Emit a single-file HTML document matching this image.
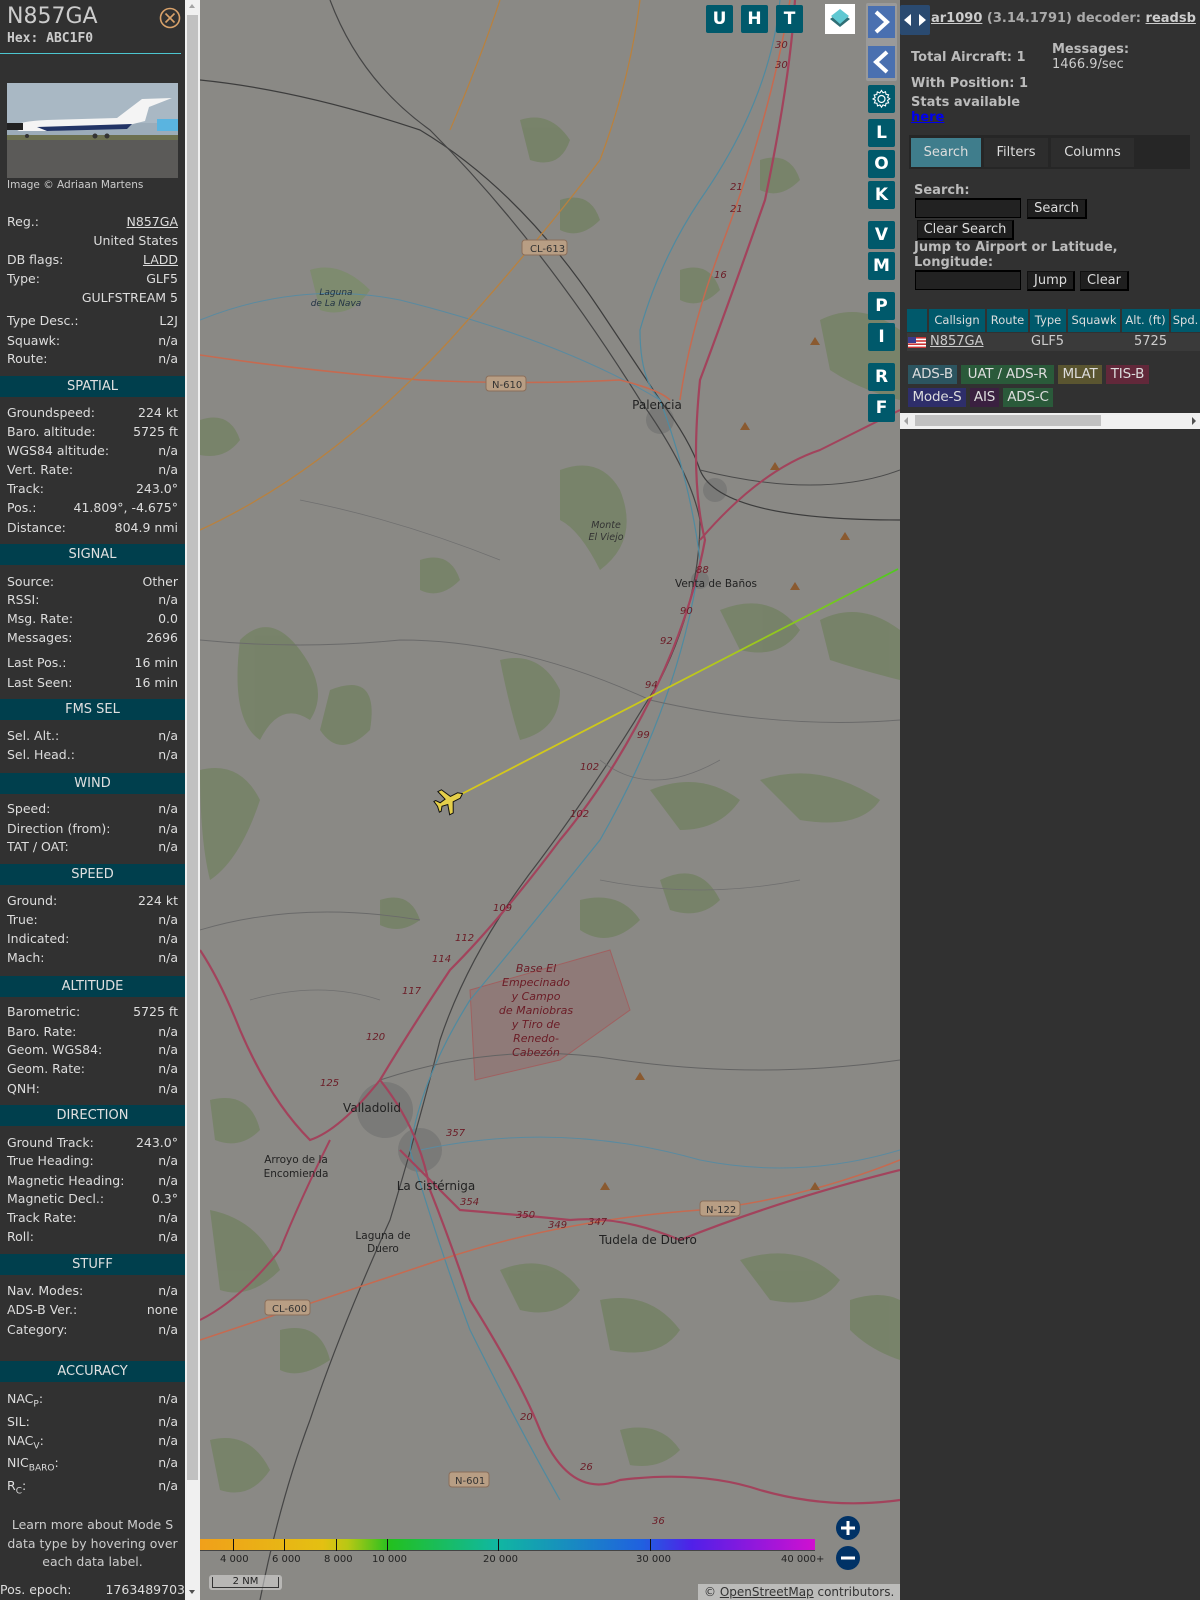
<!DOCTYPE html>
<html><head><meta charset="utf-8"><style>
*{margin:0;padding:0;box-sizing:border-box}
body{width:1200px;height:1600px;overflow:hidden;background:#313131;font-family:"DejaVu Sans","Liberation Sans",sans-serif;color:#ddd;position:relative}
.abs{position:absolute}
#side{position:absolute;left:0;top:0;width:185px;height:1600px;background:#313131}
.r{position:absolute;left:7px;width:171px;font-size:12.5px;line-height:16px;color:#ddd;display:flex;justify-content:space-between;white-space:nowrap}
.r span:last-child{text-align:right}
.h{position:absolute;left:0;width:185px;height:21px;background:#003f4d;color:#e0e0e0;font-size:13px;line-height:21px;text-align:center}
u{text-decoration:underline}
#sb{position:absolute;left:185px;top:0;width:15px;height:1600px;background:#f0f0f0}
#map{position:absolute;left:200px;top:0;width:700px;height:1600px;background:#8a8985;overflow:hidden}
.mb{position:absolute;width:27px;height:28px;background:#00596b;color:#fff;font-weight:bold;font-size:17px;text-align:center;line-height:28px;border-radius:2px}
#right{position:absolute;left:900px;top:0;width:300px;height:1600px;background:#313131}
.b{font-weight:bold;color:#bbb;font-size:13px}
.btn{position:absolute;background:#1f1f1f;border:1px solid #111;border-right:2px solid #000;border-bottom:2px solid #000;color:#ddd;font-size:13px;text-align:center;line-height:17px}
.inp{position:absolute;background:#222;border:1px solid #000;border-top:2px solid #000}
.th{position:absolute;top:309px;height:23px;background:#00596b;color:#ddd;font-size:11.5px;line-height:23px;text-align:center}
.bd{position:absolute;height:19px;font-size:13.5px;line-height:19px;text-align:center;color:#ddd;white-space:nowrap;letter-spacing:-0.2px}
.lab{position:absolute;font-size:10px;color:#222}
</style></head><body>
<div id="side">
<div class="abs" style="left:7px;top:4px;font-size:22px;color:#ccc">N857GA</div>
<div class="abs" style="left:7px;top:31px;font-size:13px;font-weight:bold;font-family:'DejaVu Sans Mono','Liberation Mono',monospace;color:#ccc">Hex: ABC1F0</div>
<svg class="abs" style="left:159px;top:7px" width="22" height="22"><circle cx="11" cy="11" r="9.5" fill="none" stroke="#d9a26a" stroke-width="1.6"/><path d="M6.5 6.5L15.5 15.5M15.5 6.5L6.5 15.5" stroke="#d9a26a" stroke-width="1.6"/></svg>
<div class="abs" style="left:0;top:53px;width:181px;height:1px;background:#4cc6d0"></div>
<svg class="abs" style="left:7px;top:83px" width="171" height="95">
<rect width="171" height="95" fill="#9cacb9"/><rect y="0" width="171" height="40" fill="#a9b8c4"/><rect y="55" width="171" height="40" fill="#5b5a58"/><rect y="52" width="171" height="5" fill="#6c7050"/>
<path d="M5 44 Q12 38 40 37 L110 35 L135 16 L165 15 L142 24 L138 38 L110 45 L40 48 L12 48 Z" fill="#f4f4f4"/><path d="M30 44 L125 41 L120 46 L40 48Z" fill="#223466"/><rect x="150" y="36" width="21" height="12" fill="#5ab4e0"/><rect x="0" y="40" width="16" height="7" fill="#222"/>
<g fill="#333"><circle cx="20" cy="53" r="2"/><circle cx="88" cy="53" r="2.5"/><circle cx="100" cy="53" r="2.5"/></g>
</svg>
<div class="abs" style="left:7px;top:179px;font-size:10.5px;color:#ccc">Image © Adriaan Martens</div>

<div class="r" style="top:214px"><span>Reg.:</span><span><u>N857GA</u></span></div>
<div class="r" style="top:233px"><span></span><span>United States</span></div>
<div class="r" style="top:252px"><span>DB flags:</span><span><u>LADD</u></span></div>
<div class="r" style="top:271px"><span>Type:</span><span>GLF5</span></div>
<div class="r" style="top:290px"><span></span><span>GULFSTREAM 5</span></div>
<div class="r" style="top:313px"><span>Type Desc.:</span><span>L2J</span></div>
<div class="r" style="top:333px"><span>Squawk:</span><span>n/a</span></div>
<div class="r" style="top:351px"><span>Route:</span><span>n/a</span></div>
<div class="h" style="top:376px">SPATIAL</div>
<div class="r" style="top:405px"><span>Groundspeed:</span><span>224 kt</span></div>
<div class="r" style="top:424px"><span>Baro. altitude:</span><span>5725 ft</span></div>
<div class="r" style="top:443px"><span>WGS84 altitude:</span><span>n/a</span></div>
<div class="r" style="top:462px"><span>Vert. Rate:</span><span>n/a</span></div>
<div class="r" style="top:481px"><span>Track:</span><span>243.0°</span></div>
<div class="r" style="top:500px"><span>Pos.:</span><span>41.809°, -4.675°</span></div>
<div class="r" style="top:520px"><span>Distance:</span><span>804.9 nmi</span></div>
<div class="h" style="top:544px">SIGNAL</div>
<div class="r" style="top:574px"><span>Source:</span><span>Other</span></div>
<div class="r" style="top:592px"><span>RSSI:</span><span>n/a</span></div>
<div class="r" style="top:611px"><span>Msg. Rate:</span><span>0.0</span></div>
<div class="r" style="top:630px"><span>Messages:</span><span>2696</span></div>
<div class="r" style="top:655px"><span>Last Pos.:</span><span>16 min</span></div>
<div class="r" style="top:675px"><span>Last Seen:</span><span>16 min</span></div>
<div class="h" style="top:699px">FMS SEL</div>
<div class="r" style="top:728px"><span>Sel. Alt.:</span><span>n/a</span></div>
<div class="r" style="top:747px"><span>Sel. Head.:</span><span>n/a</span></div>
<div class="h" style="top:773px">WIND</div>
<div class="r" style="top:801px"><span>Speed:</span><span>n/a</span></div>
<div class="r" style="top:821px"><span>Direction (from):</span><span>n/a</span></div>
<div class="r" style="top:839px"><span>TAT / OAT:</span><span>n/a</span></div>
<div class="h" style="top:864px">SPEED</div>
<div class="r" style="top:893px"><span>Ground:</span><span>224 kt</span></div>
<div class="r" style="top:912px"><span>True:</span><span>n/a</span></div>
<div class="r" style="top:931px"><span>Indicated:</span><span>n/a</span></div>
<div class="r" style="top:950px"><span>Mach:</span><span>n/a</span></div>
<div class="h" style="top:976px">ALTITUDE</div>
<div class="r" style="top:1004px"><span>Barometric:</span><span>5725 ft</span></div>
<div class="r" style="top:1024px"><span>Baro. Rate:</span><span>n/a</span></div>
<div class="r" style="top:1042px"><span>Geom. WGS84:</span><span>n/a</span></div>
<div class="r" style="top:1061px"><span>Geom. Rate:</span><span>n/a</span></div>
<div class="r" style="top:1081px"><span>QNH:</span><span>n/a</span></div>
<div class="h" style="top:1105px">DIRECTION</div>
<div class="r" style="top:1135px"><span>Ground Track:</span><span>243.0°</span></div>
<div class="r" style="top:1153px"><span>True Heading:</span><span>n/a</span></div>
<div class="r" style="top:1173px"><span>Magnetic Heading:</span><span>n/a</span></div>
<div class="r" style="top:1191px"><span>Magnetic Decl.:</span><span>0.3°</span></div>
<div class="r" style="top:1210px"><span>Track Rate:</span><span>n/a</span></div>
<div class="r" style="top:1229px"><span>Roll:</span><span>n/a</span></div>
<div class="h" style="top:1254px">STUFF</div>
<div class="r" style="top:1283px"><span>Nav. Modes:</span><span>n/a</span></div>
<div class="r" style="top:1302px"><span>ADS-B Ver.:</span><span>none</span></div>
<div class="r" style="top:1322px"><span>Category:</span><span>n/a</span></div>
<div class="h" style="top:1361px">ACCURACY</div>
<div class="r" style="top:1391px"><span>NAC<sub style="font-size:9px">P</sub>:</span><span>n/a</span></div>
<div class="r" style="top:1414px"><span>SIL:</span><span>n/a</span></div>
<div class="r" style="top:1433px"><span>NAC<sub style="font-size:9px">V</sub>:</span><span>n/a</span></div>
<div class="r" style="top:1455px"><span>NIC<sub style="font-size:9px">BARO</sub>:</span><span>n/a</span></div>
<div class="r" style="top:1478px"><span>R<sub style="font-size:9px">C</sub>:</span><span>n/a</span></div>
<div class="abs" style="left:0;top:1516px;width:185px;text-align:center;font-size:12.5px;line-height:18.5px;color:#ccc">Learn more about Mode S data type by hovering over each data label.</div>
<div class="abs" style="left:0;top:1582px;width:185px;font-size:12.5px;display:flex;justify-content:space-between;color:#ddd"><span>Pos. epoch:</span><span>1763489703</span></div>
</div>
<div id="sb"><div class="abs" style="left:2px;top:15px;width:11px;height:1465px;background:#c1c1c1"></div>
<div class="abs" style="left:4px;top:4px;width:0;height:0;border-left:3.5px solid transparent;border-right:3.5px solid transparent;border-bottom:4px solid #a3a3a3"></div>
<div class="abs" style="left:4px;top:1590px;width:0;height:0;border-left:3.5px solid transparent;border-right:3.5px solid transparent;border-top:4px solid #505050"></div></div>

<div id="map">
<svg width="700" height="1600" viewBox="200 0 700 1600" style="position:absolute;left:0;top:0">
<g fill="#70805e" opacity="0.7">
<path d="M240 640 Q270 610 300 650 Q330 690 310 720 Q280 700 260 740 Q230 720 240 640Z"/>
<path d="M330 690 Q380 670 370 730 Q340 760 320 730Z"/>
<path d="M560 470 Q600 455 620 490 Q640 540 600 570 Q580 530 560 520Z"/>
<path d="M500 660 Q540 650 560 690 Q560 730 520 740 Q510 710 500 660Z"/>
<path d="M200 770 Q240 760 260 800 Q240 860 210 880 Q200 840 200 770Z"/>
<path d="M650 790 Q700 770 740 800 Q720 830 680 830Z"/>
<path d="M760 780 Q820 760 880 800 Q860 830 800 820Z"/>
<path d="M720 610 Q770 590 800 630 Q780 660 740 650Z"/>
<path d="M820 620 Q860 600 900 630 L900 680 Q860 670 830 660Z"/>
<path d="M580 900 Q620 890 640 920 Q610 950 580 930Z"/>
<path d="M660 880 Q700 860 720 900 Q700 920 670 910Z"/>
<path d="M210 1100 Q250 1090 260 1130 Q240 1150 215 1140Z"/>
<path d="M210 1210 Q260 1220 280 1270 Q250 1300 220 1290Z"/>
<path d="M280 1330 Q320 1320 330 1360 Q300 1380 280 1370Z"/>
<path d="M500 1270 Q550 1250 580 1290 Q560 1320 520 1310Z"/>
<path d="M600 1300 Q650 1290 680 1330 Q660 1360 610 1350Z"/>
<path d="M740 1260 Q800 1240 840 1280 Q820 1310 770 1300Z"/>
<path d="M850 1300 Q880 1290 900 1300 L900 1360 Q870 1350 850 1330Z"/>
<path d="M210 1440 Q250 1430 270 1470 Q250 1500 220 1490Z"/>
<path d="M620 1430 Q660 1420 680 1450 Q660 1470 630 1465Z"/>
<path d="M520 120 Q550 110 570 140 Q560 170 530 160Z"/>
<path d="M310 270 Q340 260 370 290 Q350 320 320 310Z" fill="#798c65"/>
<path d="M820 320 Q860 300 900 330 L900 400 Q860 390 830 370Z"/>
<path d="M200 420 Q230 410 240 440 Q225 460 200 455Z"/>
<path d="M380 900 Q410 890 420 920 Q400 935 380 925Z"/>
<path d="M420 560 Q450 550 460 580 Q440 600 420 590Z"/>
<path d="M560 200 Q590 190 600 220 Q580 240 560 230Z"/>
<path d="M680 270 Q710 260 720 290 Q700 310 680 300Z"/>
<path d="M760 160 Q790 150 800 180 Q780 200 760 190Z"/>
<path d="M480 1000 Q510 990 520 1020 Q500 1040 480 1030Z"/>
</g>
<g fill="#7a7a78"><circle cx="385" cy="1110" r="28"/><circle cx="420" cy="1150" r="22"/><circle cx="660" cy="420" r="14"/><circle cx="715" cy="490" r="12"/><circle cx="700" cy="580" r="9"/></g>
<path d="M470 990 L610 950 L630 1010 L560 1060 L475 1080Z" fill="#8f7a78" stroke="#a06060" stroke-width="1"/>
<g fill="none">
<path d="M200 80 Q300 90 420 130 Q520 190 600 310 Q640 370 660 400 Q690 440 700 470 Q720 520 900 520" stroke="#3c3c3c" stroke-width="1.2"/>
<path d="M330 0 Q360 80 430 130 Q540 240 640 400 Q690 470 700 520 Q700 600 660 680 Q600 780 540 860 Q470 950 440 1040 Q420 1120 390 1220 Q340 1330 310 1420 Q280 1500 260 1600" stroke="#454545" stroke-width="1.2"/>
<path d="M700 470 Q820 500 900 470" stroke="#4a4a4a" stroke-width="1"/>
<path d="M780 0 Q770 100 700 200 Q660 260 640 330 Q640 380 660 400" stroke="#4f8aa0" stroke-width="1.2"/>
<path d="M660 400 Q690 480 700 560 Q680 700 600 840 Q520 940 470 1000 Q420 1080 410 1150 Q440 1250 470 1330 Q520 1430 560 1500" stroke="#4f8aa0" stroke-width="1.2"/>
<path d="M200 320 Q300 280 400 300 Q560 340 660 400" stroke="#5a8aa0" stroke-width="1"/>
<path d="M420 1150 Q560 1120 700 1160 Q800 1180 900 1150" stroke="#5a8aa0" stroke-width="1"/>
<path d="M200 355 Q300 370 420 380 Q520 385 620 380 Q660 390 670 400" stroke="#c66a50" stroke-width="1.6"/>
<path d="M200 530 Q330 470 450 340 Q540 240 600 160 Q630 80 640 0" stroke="#b9813e" stroke-width="1.3"/>
<path d="M450 130 Q480 60 500 0" stroke="#b9813e" stroke-width="1.2"/>
<path d="M790 0 Q770 120 720 250 Q690 330 680 400" stroke="#c66a50" stroke-width="1.5"/>
<path d="M200 1340 Q320 1300 440 1260 Q560 1220 700 1210 Q800 1200 900 1160" stroke="#c66a50" stroke-width="1.5"/>
<path d="M380 1080 Q500 1040 620 1060 Q760 1080 900 1060" stroke="#636363" stroke-width="1"/>
<path d="M200 640 Q300 650 400 640 Q520 640 650 700 Q780 730 900 720" stroke="#6a6a6a" stroke-width="0.9"/>
<path d="M200 930 Q300 900 420 920" stroke="#6a6a6a" stroke-width="0.9"/>
<path d="M300 500 Q400 520 500 560 M600 880 Q700 900 800 880 M250 1000 Q320 980 380 1000 M600 760 Q650 800 720 760" stroke="#6f6f6f" stroke-width="0.8"/>
<path d="M795 0 Q790 80 765 200 Q730 300 700 380 Q690 480 705 540 Q690 620 650 700 Q610 780 560 840 Q500 920 450 970 Q410 1030 380 1080 Q340 1130 310 1140 Q270 1100 240 1030 Q220 980 200 950" stroke="#a2435c" stroke-width="2.2"/>
<path d="M380 1080 Q420 1130 430 1190 Q450 1240 470 1300 Q520 1380 540 1430 Q570 1500 620 1480 Q700 1470 760 1490 Q830 1510 900 1500" stroke="#a2435c" stroke-width="2.2"/>
<path d="M400 1150 Q440 1190 460 1210 Q520 1215 570 1220 Q620 1215 680 1240 Q780 1200 900 1170" stroke="#a2435c" stroke-width="2.2"/>
<path d="M700 540 Q760 470 820 450 Q860 430 900 410" stroke="#a2435c" stroke-width="2"/>
<path d="M330 1140 Q300 1200 280 1250 Q240 1300 200 1320" stroke="#a2435c" stroke-width="2"/>
<path d="M450 800 L898 569" stroke="url(#tr)" stroke-width="1.8"/>
</g>
<defs><linearGradient id="tr" x1="450" y1="0" x2="898" y2="0" gradientUnits="userSpaceOnUse"><stop offset="0" stop-color="#d8c81a"/><stop offset="0.5" stop-color="#c8c81a"/><stop offset="1" stop-color="#50c820"/></linearGradient></defs>
<g fill="#8a5a30"><path d="M740 430l5-8 5 8z"/><path d="M770 470l5-8 5 8z"/><path d="M810 345l5-8 5 8z"/><path d="M790 590l5-8 5 8z"/><path d="M840 540l5-8 5 8z"/><path d="M635 1080l5-8 5 8z"/><path d="M600 1190l5-8 5 8z"/><path d="M810 1190l5-8 5 8z"/></g>
<g font-family="DejaVu Sans,sans-serif" font-size="12" fill="#222" text-anchor="middle">
<text x="657" y="409">Palencia</text><text x="372" y="1112">Valladolid</text><text x="436" y="1190">La Cistérniga</text><text x="648" y="1244">Tudela de Duero</text><text x="716" y="587" font-size="10.5">Venta de Baños</text>
<text x="296" y="1163" font-size="10.5">Arroyo de la</text><text x="296" y="1177" font-size="10.5">Encomienda</text><text x="383" y="1239" font-size="10.5">Laguna de</text><text x="383" y="1252" font-size="10.5">Duero</text>
</g>
<g font-family="DejaVu Sans,sans-serif" font-size="11" fill="#6b1c26" font-style="italic" text-anchor="middle">
<text x="536" y="972">Base El</text><text x="536" y="986">Empecinado</text><text x="536" y="1000">y Campo</text><text x="536" y="1014">de Maniobras</text><text x="536" y="1028">y Tiro de</text><text x="536" y="1042">Renedo-</text><text x="536" y="1056">Cabezón</text>
<text x="606" y="528" fill="#333" font-size="9.5">Monte</text><text x="606" y="540" fill="#333" font-size="9.5">El Viejo</text>
<text x="336" y="295" fill="#234" font-size="9">Laguna</text><text x="336" y="306" fill="#234" font-size="9">de La Nava</text>
</g>
<g font-family="DejaVu Sans,sans-serif" font-size="10" fill="#333">
<rect x="522" y="240" width="45" height="15" rx="3" fill="#b89e84" stroke="#8a6e5a"/><text x="530" y="252">CL-613</text>
<rect x="486" y="376" width="40" height="15" rx="3" fill="#b89e84" stroke="#8a6e5a"/><text x="492" y="388">N-610</text>
<rect x="700" y="1201" width="40" height="15" rx="3" fill="#b89e84" stroke="#8a6e5a"/><text x="706" y="1213">N-122</text>
<rect x="265" y="1300" width="45" height="15" rx="3" fill="#b89e84" stroke="#8a6e5a"/><text x="272" y="1312">CL-600</text>
<rect x="449" y="1472" width="40" height="15" rx="3" fill="#b89e84" stroke="#8a6e5a"/><text x="455" y="1484">N-601</text>
</g>
<g font-family="DejaVu Sans,sans-serif" font-size="10" fill="#6b1c26" font-style="italic">
<text x="775" y="48">30</text><text x="775" y="68">30</text><text x="730" y="190">21</text><text x="730" y="212">21</text><text x="714" y="278">16</text><text x="645" y="688">94</text><text x="637" y="738">99</text><text x="580" y="770">102</text><text x="570" y="817">102</text><text x="493" y="911">109</text><text x="455" y="941">112</text><text x="432" y="962">114</text><text x="402" y="994">117</text><text x="366" y="1040">120</text><text x="320" y="1086">125</text><text x="446" y="1136">357</text><text x="460" y="1205">354</text><text x="516" y="1218">350</text><text x="548" y="1228">349</text><text x="588" y="1225">347</text><text x="696" y="573">88</text><text x="680" y="614">90</text><text x="660" y="644">92</text><text x="520" y="1420">20</text><text x="580" y="1470">26</text><text x="652" y="1524">36</text><text x="836" y="1531">44</text>
</g>
<g transform="translate(450,800) rotate(-27)"><path d="M14 0 L10 -3 L2 -3 L-3 -13 L-7 -13 L-4 -3 L-10 -2 L-13 -6 L-15 -6 L-14 0 L-15 6 L-13 6 L-10 2 L-4 3 L-7 13 L-3 13 L2 3 L10 3Z" fill="#e5cf4a" stroke="#111" stroke-width="1"/></g>
</svg>
<div class="mb" style="left:506px;top:5px">U</div><div class="mb" style="left:541px;top:5px">H</div><div class="mb" style="left:576px;top:5px">T</div>
<div class="abs" style="left:625px;top:4px;width:30px;height:30px;background:#fff"><svg width="30" height="30"><path d="M15 8 L25 15 L15 23 L5 15Z" fill="#2f6f76"/><path d="M15 5 L24 12 L15 20 L6 12Z" fill="#5fc8d2"/></svg></div>
<div class="abs" style="left:666px;top:3px;width:31px;height:78px;background:#9a9a9a;border-radius:2px"></div>
<div class="abs" style="left:668px;top:6px;width:27px;height:32px;background:#4a70b0"><svg width="27" height="32"><path d="M8 6 L19 16 L8 26" stroke="#fff" stroke-width="4" fill="none"/></svg></div>
<div class="abs" style="left:668px;top:46px;width:27px;height:32px;background:#4a70b0"><svg width="27" height="32"><path d="M19 6 L8 16 L19 26" stroke="#fff" stroke-width="4" fill="none"/></svg></div>
<div class="mb" style="left:668px;top:85px"><svg width="27" height="28"><circle cx="13.5" cy="14" r="3.5" fill="none" stroke="#fff" stroke-width="1.2"/><path d="M13.5 5.5l1.5 2.2 2.5-1 .5 2.6 2.6.5-1 2.5 2.2 1.5-2.2 1.5 1 2.5-2.6.5-.5 2.6-2.5-1-1.5 2.2-1.5-2.2-2.5 1-.5-2.6-2.6-.5 1-2.5L5 14l2.2-1.5-1-2.5 2.6-.5.5-2.6 2.5 1z" fill="none" stroke="#fff" stroke-width="1.1"/></svg></div>
<div class="mb" style="left:668px;top:119px">L</div><div class="mb" style="left:668px;top:150px">O</div><div class="mb" style="left:668px;top:181px">K</div>
<div class="mb" style="left:668px;top:221px">V</div><div class="mb" style="left:668px;top:252px">M</div>
<div class="mb" style="left:668px;top:292px">P</div><div class="mb" style="left:668px;top:323px">I</div>
<div class="mb" style="left:668px;top:363px">R</div><div class="mb" style="left:668px;top:394px">F</div>
<div class="abs" style="left:0;top:1539px;width:615px;height:12px;background:linear-gradient(90deg,#f0a01a 0%,#e4c012 20%,#b8c814 24%,#22c020 31%,#10b8a0 48%,#2060e0 72%,#5020e8 80%,#d010d0 100%);border-bottom:1px solid #444"></div>
<div class="abs" style="left:33px;top:1539px;width:1px;height:12px;background:#111"></div><div class="abs" style="left:84px;top:1539px;width:1px;height:12px;background:#111"></div><div class="abs" style="left:136px;top:1539px;width:1px;height:12px;background:#111"></div><div class="abs" style="left:187px;top:1539px;width:1px;height:12px;background:#111"></div><div class="abs" style="left:298px;top:1539px;width:1px;height:12px;background:#111"></div><div class="abs" style="left:450px;top:1539px;width:1px;height:12px;background:#111"></div>
<div class="lab" style="left:20px;top:1554px">4 000</div><div class="lab" style="left:72px;top:1554px">6 000</div><div class="lab" style="left:124px;top:1554px">8 000</div><div class="lab" style="left:172px;top:1554px">10 000</div><div class="lab" style="left:283px;top:1554px">20 000</div><div class="lab" style="left:436px;top:1554px">30 000</div><div class="lab" style="left:581px;top:1554px">40 000+</div>
<div class="abs" style="left:9px;top:1575px;width:73px;height:15px;background:rgba(230,230,230,.5);border-radius:3px"><div style="margin:2px 3px;height:11px;border:1px solid #333;border-top:none;font-size:10px;line-height:10px;text-align:center;color:#222">2 NM</div></div>
<svg class="abs" style="left:635px;top:1515px" width="26" height="56"><circle cx="13" cy="13" r="12" fill="#003266"/><path d="M6 13H20M13 6V20" stroke="#fff" stroke-width="3"/><circle cx="13" cy="43" r="12" fill="#003266"/><path d="M6 43H20" stroke="#fff" stroke-width="3"/></svg>
<div class="abs" style="left:498px;top:1584px;width:202px;height:16px;background:rgba(230,230,230,.55);font-size:12px;line-height:16px;color:#333;padding-left:6px">© <u>OpenStreetMap</u> contributors.</div>
</div>

<div id="right">
<div class="abs" style="left:0;top:5px;width:30px;height:30px;background:#2a4a70;border-radius:2px"><svg width="30" height="30"><path d="M4 15L11 9V21Z M26 15L19 9V21Z" fill="#fff"/></svg></div>
<div class="abs b" style="left:31px;top:11px;color:#ccc"><u>ar1090</u> <span style="color:#aaa">(3.14.1791) decoder:</span> <u>readsb</u></div>
<div class="abs b" style="left:11px;top:50px">Total Aircraft: 1</div>
<div class="abs b" style="left:152px;top:42px">Messages:<br><span style="font-weight:normal;color:#ccc">1466.9/sec</span></div>
<div class="abs b" style="left:11px;top:76px">With Position: 1</div>
<div class="abs b" style="left:11px;top:95px">Stats available</div>
<div class="abs b" style="left:11px;top:110px;color:#00e"><u>here</u></div>
<div class="abs" style="left:9px;top:135px;width:281px;height:34px;background:#262626"></div>
<div class="abs" style="left:11px;top:138px;width:70px;height:29px;background:#3f7d8c;color:#ddd;font-size:13px;line-height:29px;text-align:center">Search</div>
<div class="abs" style="left:84px;top:138px;width:64px;height:29px;background:#2d2d2d;color:#ddd;font-size:13px;line-height:29px;text-align:center">Filters</div>
<div class="abs" style="left:151px;top:138px;width:83px;height:29px;background:#2d2d2d;color:#ddd;font-size:13px;line-height:29px;text-align:center">Columns</div>
<div class="abs b" style="left:14px;top:183px">Search:</div>
<div class="inp" style="left:15px;top:198px;width:106px;height:20px"></div>
<div class="btn" style="left:127px;top:199px;width:60px;height:20px">Search</div>
<div class="btn" style="left:17px;top:220px;width:97px;height:20px">Clear Search</div>
<div class="abs b" style="left:14px;top:240px;line-height:15px">Jump to Airport or Latitude,<br>Longitude:</div>
<div class="inp" style="left:15px;top:270px;width:106px;height:20px"></div>
<div class="btn" style="left:127px;top:271px;width:48px;height:20px">Jump</div>
<div class="btn" style="left:180px;top:271px;width:49px;height:20px">Clear</div>
<div class="th" style="left:7px;width:20px"></div>
<div class="th" style="left:29px;width:56px">Callsign</div>
<div class="th" style="left:87px;width:41px">Route</div>
<div class="th" style="left:130px;width:36px">Type</div>
<div class="th" style="left:168px;width:52px">Squawk</div>
<div class="th" style="left:222px;width:47px">Alt. (ft)</div>
<div class="th" style="left:271px;width:29px">Spd.</div>
<div class="abs" style="left:7px;top:333px;width:293px;height:18px;background:#3a3a3a"></div>
<svg class="abs" style="left:8px;top:337px" width="18" height="11"><rect width="18" height="11" fill="#fff"/><g fill="#c33"><rect y="0" width="18" height="1.6"/><rect y="3.2" width="18" height="1.6"/><rect y="6.4" width="18" height="1.6"/><rect y="9.6" width="18" height="1.4"/></g><rect width="8" height="6" fill="#3c3b8e"/></svg>
<div class="abs" style="left:30px;top:334px;font-size:13px;color:#ccc"><u>N857GA</u></div>
<div class="abs" style="left:131px;top:334px;font-size:13px;color:#ccc">GLF5</div>
<div class="abs" style="left:234px;top:334px;font-size:13px;color:#ccc">5725</div>
<div class="bd" style="left:8px;top:365px;width:49px;background:#2c5560">ADS-B</div>
<div class="bd" style="left:61px;top:365px;width:93px;background:#2a5a3a">UAT / ADS-R</div>
<div class="bd" style="left:158px;top:365px;width:44px;background:#5a5530">MLAT</div>
<div class="bd" style="left:206px;top:365px;width:43px;background:#62283a">TIS-B</div>
<div class="bd" style="left:8px;top:388px;width:58px;background:#2e2e6a">Mode-S</div>
<div class="bd" style="left:70px;top:388px;width:29px;background:#3a2040">AIS</div>
<div class="bd" style="left:103px;top:388px;width:50px;background:#2a5a3a">ADS-C</div>
<div class="abs" style="left:0;top:413px;width:300px;height:16px;background:#f0f0f0"><div style="position:absolute;left:15px;top:2px;width:186px;height:11px;background:#c1c1c1"></div>
<div style="position:absolute;left:4px;top:4px;border-top:4px solid transparent;border-bottom:4px solid transparent;border-right:4px solid #a3a3a3"></div>
<div style="position:absolute;right:4px;top:4px;border-top:4px solid transparent;border-bottom:4px solid transparent;border-left:4px solid #505050"></div></div>
</div>
</body></html>
